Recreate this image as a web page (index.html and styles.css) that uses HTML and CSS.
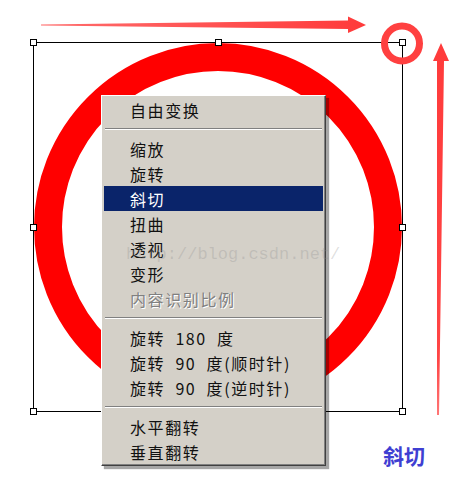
FILE: index.html
```html
<!DOCTYPE html>
<html lang="zh">
<head>
<meta charset="utf-8">
<title>斜切</title>
<link rel="stylesheet" href="styles.css">
</head>
<body>
<div class="stage">
  <svg class="canvas" width="465" height="489" viewBox="0 0 465 489" xmlns="http://www.w3.org/2000/svg">
    <defs>
      <linearGradient id="tailfade" x1="41" y1="0" x2="365" y2="0" gradientUnits="userSpaceOnUse">
        <stop offset="0" stop-color="#ff3b3b" stop-opacity="0.75"/>
        <stop offset="0.4" stop-color="#ff3b3b" stop-opacity="0.85"/>
        <stop offset="1" stop-color="#ff3b3b" stop-opacity="1"/>
      </linearGradient>
      <linearGradient id="shaftfade" x1="0" y1="44" x2="0" y2="415" gradientUnits="userSpaceOnUse">
        <stop offset="0" stop-color="#ff3b3b" stop-opacity="1"/>
        <stop offset="0.85" stop-color="#ff3b3b" stop-opacity="0.95"/>
        <stop offset="1" stop-color="#ff3b3b" stop-opacity="0.7"/>
      </linearGradient>
    </defs>
    <circle cx="218" cy="227" r="170" fill="none" stroke="#ff0000" stroke-width="28"/>
    <rect x="33.5" y="42.5" width="369" height="369" fill="none" stroke="#000" stroke-width="1"/>
    <g fill="#fff" stroke="#000" stroke-width="1">
      <rect x="30.5" y="39.5" width="6" height="6"/>
      <rect x="215.5" y="39.5" width="6" height="6"/>
      <rect x="399.5" y="39.5" width="6" height="6"/>
      <rect x="30.5" y="224.5" width="6" height="6"/>
      <rect x="399.5" y="224.5" width="6" height="6"/>
      <rect x="30.5" y="408.5" width="6" height="6"/>
      <rect x="399.5" y="408.5" width="6" height="6"/>
    </g>
    <path d="M41 24.5 L348 20.5 L348 16.5 L366 25 L348 33 L348 29 L41 25.5 Z" fill="url(#tailfade)"/>
    <path d="M441 43 L449 61 L444 61 L439 415 L437 415 L437 61 L433 61 Z" fill="url(#shaftfade)"/>
    <circle cx="402" cy="43.5" r="17.5" fill="none" stroke="#ff4040" stroke-width="7"/>
  </svg>

  <div class="menu">
    <div class="item">自由变换</div>
    <div class="sep"></div>
    <div class="item">缩放</div>
    <div class="item">旋转</div>
    <div class="item active">斜切</div>
    <div class="item">扭曲</div>
    <div class="item">透视</div>
    <div class="item">变形</div>
    <div class="item disabled">内容识别比例</div>
    <div class="sep"></div>
    <div class="item">旋转 180 度</div>
    <div class="item">旋转 90 度(顺时针)</div>
    <div class="item">旋转 90 度(逆时针)</div>
    <div class="sep"></div>
    <div class="item">水平翻转</div>
    <div class="item">垂直翻转</div>
  </div>

  <div class="watermark">http://blog.csdn.net/</div>
  <div class="label">斜切</div>
</div>
</body>
</html>
```

FILE: styles.css
```css
html, body {
  margin: 0;
  padding: 0;
  background: #ffffff;
}

.stage {
  position: relative;
  width: 465px;
  height: 489px;
  overflow: hidden;
}

.canvas {
  position: absolute;
  left: 0;
  top: 0;
  display: block;
}

.menu {
  position: absolute;
  left: 101px;
  top: 95px;
  width: 225px;
  box-sizing: border-box;
  padding: 1px 2px 1px 2px;
  background: #d4d0c8;
  border: 1px solid;
  border-color: #ffffff #404040 #404040 #ffffff;
  box-shadow: inset -1px -1px 0 #808080, 3px 3px 1px rgba(0, 0, 0, 0.35);
  font-family: "Noto Sans CJK SC", "Liberation Sans", sans-serif;
  font-size: 16px;
  font-weight: 400;
  color: #111;
  display: flex;
  flex-direction: column;
}

.item {
  height: 25px;
  line-height: 26px;
  padding-left: 26px;
  letter-spacing: 1.6px;
  word-spacing: 5px;
  white-space: pre;
}

.item.active {
  background: #0a246a;
  color: #ffffff;
}

.item.disabled {
  color: #808080;
  text-shadow: 1px 1px 0 #ffffff;
}

.sep {
  height: 14px;
  display: flex;
  flex-direction: column;
  justify-content: center;
  padding: 0 1px;
}

.sep::before {
  content: "";
  display: block;
  height: 1px;
  background: #808080;
  border-bottom: 1px solid #ffffff;
}

.watermark {
  position: absolute;
  left: 126px;
  top: 243px;
  font-family: "Liberation Mono", monospace;
  font-size: 17px;
  line-height: 24px;
  color: rgba(140, 140, 140, 0.28);
  pointer-events: none;
}

.label {
  position: absolute;
  left: 383px;
  top: 441px;
  font-family: "Noto Sans CJK SC", sans-serif;
  font-size: 21px;
  font-weight: 700;
  line-height: 28px;
  color: #3f3fd2;
}
```
